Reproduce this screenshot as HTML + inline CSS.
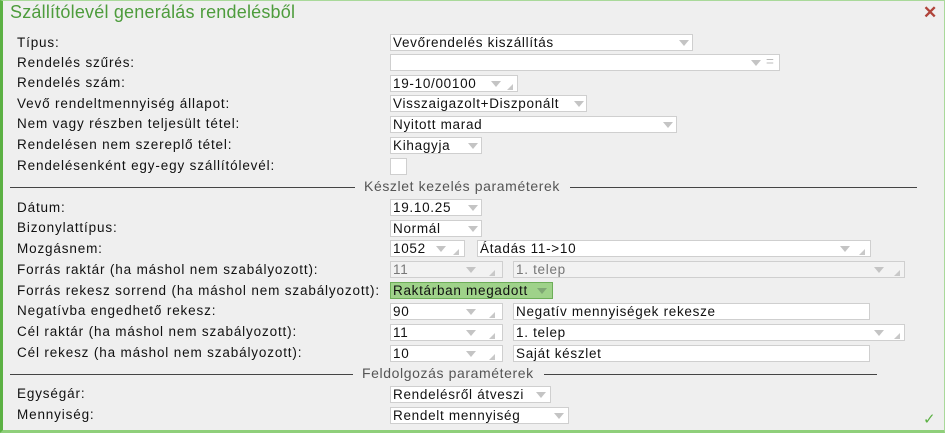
<!DOCTYPE html>
<html><head><meta charset="utf-8"><style>
body{margin:0;width:945px;height:433px;overflow:hidden;background:#fff;font-family:"Liberation Sans",sans-serif;}
#w{position:absolute;left:0;top:0;background:#efefef;border-left:3px solid #5cb144;border-bottom:3px solid #8fcf7a;border-right:1px solid #a9d99a;border-top:1px solid #a9d99a;box-sizing:border-box;width:945px;height:433px}
.t{position:absolute;left:10px;top:2px;font-size:18px;color:#4d9c3c;letter-spacing:0.2px}
.x{position:absolute;left:923px;top:3px;font-size:17px;color:#b0443a;font-weight:bold}
.l{position:absolute;left:17px;font-size:13.5px;letter-spacing:0.85px;color:#111;line-height:16px;white-space:nowrap}
.b{position:absolute;height:17px;background:#fff;border:1px solid #cfcfcf;box-sizing:border-box;font-size:13.5px;letter-spacing:0.7px;line-height:16px;padding-left:2px;color:#111;white-space:nowrap}
.b.d{background:#f2f2f2;color:#777}
.b.g{background:#9fd28a;border-color:#6dae58}
.a{position:absolute;top:5px;width:0;height:0;border-left:5px solid transparent;border-right:5px solid transparent;border-top:6px solid #c4c4c4}
.r{position:absolute;top:8px;width:0;height:0;border-left:6px solid transparent;border-bottom:6px solid #c8c8c8}
.ln{position:absolute;height:1px;background:#444}
.s{position:absolute;font-size:14px;letter-spacing:0.6px;color:#555;white-space:nowrap}
.ck{position:absolute;font-size:15px;color:#5cb144;left:923px;top:410px}
</style></head><body><div id="w"></div>
<div class="t">Szállítólevél generálás rendelésből</div>
<div class="x">✕</div>
<div class="l" style="top:35px">Típus:</div>
<div class="l" style="top:55px">Rendelés szűrés:</div>
<div class="l" style="top:75px">Rendelés szám:</div>
<div class="l" style="top:96px">Vevő rendeltmennyiség állapot:</div>
<div class="l" style="top:116px">Nem vagy részben teljesült tétel:</div>
<div class="l" style="top:137px">Rendelésen nem szereplő tétel:</div>
<div class="l" style="top:158px">Rendelésenként egy-egy szállítólevél:</div>
<div class="ln" style="left:10px;width:345px;top:187px"></div>
<div class="s" style="left:364px;top:178px">Készlet kezelés paraméterek</div>
<div class="ln" style="left:570px;width:347px;top:187px"></div>
<div class="l" style="top:200px">Dátum:</div>
<div class="l" style="top:220px">Bizonylattípus:</div>
<div class="l" style="top:241px">Mozgásnem:</div>
<div class="l" style="top:262px">Forrás raktár (ha máshol nem szabályozott):</div>
<div class="l" style="top:283px">Forrás rekesz sorrend (ha máshol nem szabályozott):</div>
<div class="l" style="top:303px">Negatívba engedhető rekesz:</div>
<div class="l" style="top:324px">Cél raktár (ha máshol nem szabályozott):</div>
<div class="l" style="top:345px">Cél rekesz (ha máshol nem szabályozott):</div>
<div class="ln" style="left:10px;width:343px;top:374px"></div>
<div class="s" style="left:362px;top:365px">Feldolgozás paraméterek</div>
<div class="ln" style="left:544px;width:333px;top:374px"></div>
<div class="l" style="top:386px">Egységár:</div>
<div class="l" style="top:407px">Mennyiség:</div>

<div class="b" style="left:390px;top:34px;width:303px">Vevőrendelés kiszállítás<i class="a" style="left:288px"></i></div>
<div class="b" style="left:390px;top:54px;width:390px"><i class="a" style="left:360px"></i><span style="position:absolute;left:375px;top:-1px;color:#bbb">=</span></div>
<div class="b" style="left:390px;top:75px;width:128px">19-10/00100<i class="a" style="left:100px"></i><i class="r" style="left:116px"></i></div>
<div class="b" style="left:390px;top:95px;width:197px">Visszaigazolt+Diszponált<i class="a" style="left:183px"></i></div>
<div class="b" style="left:390px;top:116px;width:287px">Nyitott marad<i class="a" style="left:272px"></i></div>
<div class="b" style="left:390px;top:137px;width:92px">Kihagyja<i class="a" style="left:77px"></i></div>
<div class="b" style="left:390px;top:158px;width:17px;height:17px"></div>

<div class="b" style="left:390px;top:199px;width:92px">19.10.25<i class="a" style="left:77px"></i></div>
<div class="b" style="left:390px;top:220px;width:92px">Normál<i class="a" style="left:77px"></i></div>
<div class="b" style="left:390px;top:240px;width:75px">1052<i class="a" style="left:45px"></i><i class="r" style="left:62px"></i></div>
<div class="b" style="left:477px;top:240px;width:394px">Átadás 11-&gt;10<i class="a" style="left:362px"></i><i class="r" style="left:381px"></i></div>
<div class="b d" style="left:390px;top:261px;width:113px">11<i class="a" style="left:75px"></i><i class="r" style="left:98px"></i></div>
<div class="b d" style="left:513px;top:261px;width:392px">1. telep<i class="a" style="left:360px"></i><i class="r" style="left:380px"></i></div>
<div class="b g" style="left:390px;top:282px;width:163px">Raktárban megadott<i class="a" style="left:146px;border-top-color:#7fa874"></i></div>
<div class="b" style="left:390px;top:303px;width:113px">90<i class="a" style="left:75px"></i><i class="r" style="left:98px"></i></div>
<div class="b" style="left:513px;top:303px;width:357px">Negatív mennyiségek rekesze</div>
<div class="b" style="left:390px;top:324px;width:113px">11<i class="a" style="left:75px"></i><i class="r" style="left:98px"></i></div>
<div class="b" style="left:513px;top:324px;width:392px">1. telep<i class="a" style="left:360px"></i><i class="r" style="left:380px"></i></div>
<div class="b" style="left:390px;top:345px;width:113px">10<i class="a" style="left:75px"></i><i class="r" style="left:98px"></i></div>
<div class="b" style="left:513px;top:345px;width:357px">Saját készlet</div>

<div class="b" style="left:390px;top:386px;width:161px">Rendelésről átveszi<i class="a" style="left:145px"></i></div>
<div class="b" style="left:390px;top:407px;width:179px">Rendelt mennyiség<i class="a" style="left:163px"></i></div>
<div class="ck">✓</div>
</body></html>
